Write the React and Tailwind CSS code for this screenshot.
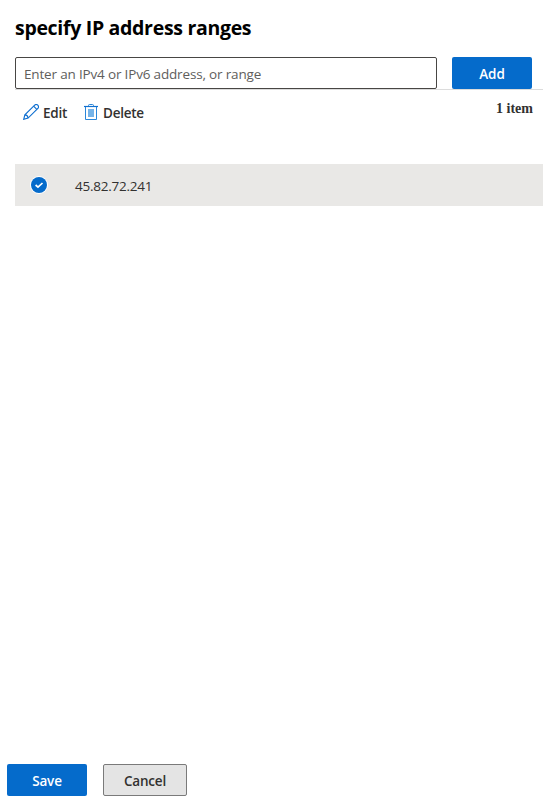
import React, { useState } from "react";

const EditIcon = () => (
  <svg width="16" height="16" viewBox="0 0 16 16" fill="none" stroke="#0f6fd0" strokeWidth="1.15">
    <path d="M0.7 15.3 L1.9 10.9 L11.9 0.9 Q13.4 -0.1 14.8 1.2 Q16.1 2.7 15.1 4.1 L5.1 14.1 Z" />
    <path d="M10.6 2.2 L13.8 5.4 M1.9 10.9 Q4.8 11.2 5.1 14.1" />
  </svg>
);

const DeleteIcon = () => (
  <svg width="14" height="16" viewBox="0 0 14 16" fill="none">
    <rect x="4" y="5" width="6" height="8" fill="#75b3e8" />
    <path d="M1.5 3 V15.5 H12.5 V3" stroke="#2b86d9" />
    <path d="M4.5 2.5 V1.5 Q4.5 0.5 5.5 0.5 H8.5 Q9.5 0.5 9.5 1.5 V2.5" stroke="#2b86d9" />
    <path d="M0 2.5 H14" stroke="#0f6fd0" strokeWidth="1.2" />
  </svg>
);

const CheckIcon = () => (
  <svg width="18" height="18" viewBox="0 0 18 18" fill="none">
    <circle cx="9" cy="9" r="9" fill="#fff" />
    <circle cx="9" cy="9" r="8" fill="#056bcb" />
    <path d="M5.6 9 L8 11.2 L12.5 7" stroke="#fff" strokeWidth="1.7" />
  </svg>
);

const App = () => {
  const [address, setAddress] = useState("");
  const ranges = ["45.82.72.241"];

  return (
    <div className="flex h-[803px] w-[554px] flex-col bg-white font-['Open_Sans','Noto_Sans',sans-serif] text-[13.5px] leading-5 text-[#323130]">
      <h1 className="mt-3.5 ml-[15px] text-[19.5px] leading-7 font-bold tracking-[-0.31px] whitespace-nowrap text-black">
        specify IP address ranges
      </h1>

      <div className="mt-[15px] mr-[11px] ml-[15px] flex h-[33px] items-start gap-[15px] border-b border-[#dcdcdc]">
        <input
          value={address}
          onChange={(e) => setAddress(e.target.value)}
          placeholder="Enter an IPv4 or IPv6 address, or range"
          className="h-8 w-[422px] rounded-xs border border-[#484644] px-2 pt-0.5 tracking-[-0.17px] outline-none placeholder:text-[#605e5c]"
        />
        <button className="h-8 w-20 rounded-xs bg-[#056bcb] pt-0.5 font-semibold text-white">
          Add
        </button>
      </div>

      <div className="mr-[21px] ml-[23px] flex h-[74px] items-start justify-between">
        <div className="flex gap-4 pt-3.5">
          <button className="flex h-5 w-[45px] items-start gap-1 font-semibold tracking-[-0.2px]">
            <EditIcon />
            <span className="-mt-px">Edit</span>
          </button>
          <button className="flex h-5 items-start gap-[5px] font-semibold tracking-[-0.25px]">
            <DeleteIcon />
            <span className="-mt-px">Delete</span>
          </button>
        </div>
        <span className="pt-[9px] font-['Liberation_Serif',serif] text-sm font-bold">1 item</span>
      </div>

      {ranges.map((range) => (
        <div key={range} className="mr-[11px] ml-[15px] flex h-[42px] items-center bg-[#e9e8e6] pl-[15px]">
          <CheckIcon />
          <span className="ml-[27px] pt-0.5 tracking-[-0.25px]">{range}</span>
        </div>
      ))}

      <div className="mt-auto mb-[7px] ml-[7px] flex gap-4">
        <button className="h-8 w-20 rounded-xs bg-[#056bcb] pt-0.5 font-semibold tracking-[-0.2px] text-white">
          Save
        </button>
        <button className="h-8 w-[84px] rounded-xs border border-[#7a7a7a] bg-[#e4e4e4] pt-0.5 font-semibold tracking-[-0.2px]">
          Cancel
        </button>
      </div>
    </div>
  );
};

export default App;
